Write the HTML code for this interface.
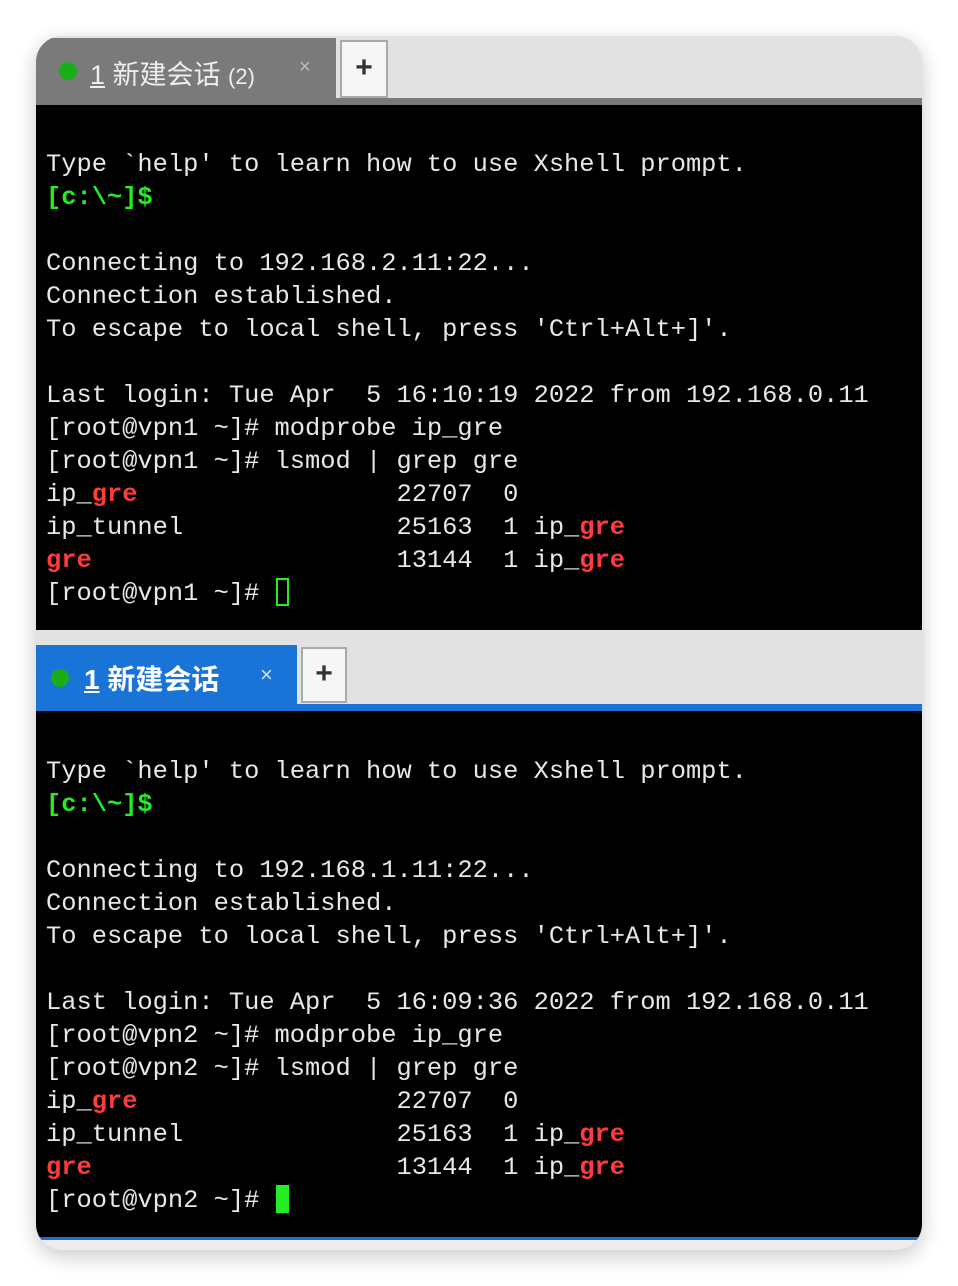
<!DOCTYPE html>
<html><head><meta charset="utf-8"><style>
html,body{margin:0;padding:0;background:#fff;width:958px;height:1286px;overflow:hidden}
.card{position:absolute;left:36px;top:36px;width:886px;height:1214px;border-radius:26px;overflow:hidden;background:#e2e2e2;box-shadow:0 6px 20px rgba(0,0,0,.22)}
.abs{position:absolute}
.term{position:absolute;left:0;width:886px;background:#000}
pre{margin:0;position:absolute;left:10px;font-family:"Liberation Mono",monospace;font-size:25.4px;line-height:33px;color:#e8e8e8}
.g{color:#22ee22;font-weight:bold}
.r{color:#ff3b3b;font-weight:bold}
.tab{font-family:"Liberation Sans","Noto Sans CJK SC",sans-serif;position:absolute}
.dot{position:absolute;width:18px;height:18px;border-radius:50%;background:#1aad1a}
.plus{position:absolute;background:#f6f6f6;border:2px solid #aaa;box-sizing:border-box;font:bold 30px "Liberation Sans",sans-serif;color:#333;text-align:center}
</style></head><body>
<div class="card">
  <div class="abs" style="left:0;top:0;width:886px;height:62px;background:#e2e2e2"></div>
  <div class="abs" style="left:0;top:2px;width:300px;height:62px;background:#7a7a7a"></div>
  <div class="dot" style="left:23px;top:26px"></div>
  <div class="tab" style="left:54px;top:17px;font-size:27px;color:#eee"><span style="text-decoration:underline">1</span> 新建会话 <span style="font-size:22px">(2)</span></div>
  <div class="tab" style="left:263px;top:20px;font-size:20px;color:#bbb">×</div>
  <div class="plus" style="left:304px;top:4px;width:48px;height:58px;line-height:52px">+</div>
  <div class="abs" style="left:0;top:62px;width:886px;height:7px;background:#7a7a7a"></div>
  <div class="term" style="top:69px;height:525px">
    <pre style="top:43px">Type `help' to learn how to use Xshell prompt.
<span class="g">[c:\~]$</span>

Connecting to 192.168.2.11:22...
Connection established.
To escape to local shell, press 'Ctrl+Alt+]'.

Last login: Tue Apr  5 16:10:19 2022 from 192.168.0.11
[root@vpn1 ~]# modprobe ip_gre
[root@vpn1 ~]# lsmod | grep gre
ip_<span class="r">gre</span>                 22707  0
ip_tunnel              25163  1 ip_<span class="r">gre</span>
<span class="r">gre</span>                    13144  1 ip_<span class="r">gre</span>
[root@vpn1 ~]# </pre>
    <div class="abs" style="left:240px;top:473px;width:13px;height:28px;border:2px solid #22ee22;box-sizing:border-box"></div>
  </div>
  <div class="abs" style="left:0;top:594px;width:886px;height:15px;background:#e2e2e2"></div>
  <div class="abs" style="left:0;top:609px;width:261px;height:60px;background:#1a73d6"></div>
  <div class="dot" style="left:15px;top:633px"></div>
  <div class="tab" style="left:48px;top:622px;font-size:28px;color:#fff;font-weight:bold"><span style="text-decoration:underline">1</span> 新建会话</div>
  <div class="tab" style="left:224px;top:626px;font-size:22px;color:#cfe0f5">×</div>
  <div class="plus" style="left:265px;top:611px;width:46px;height:56px;line-height:50px">+</div>
  <div class="abs" style="left:0;top:668px;width:886px;height:7px;background:#1a73d6"></div>
  <div class="term" style="top:675px;height:526px">
    <pre style="top:44px">Type `help' to learn how to use Xshell prompt.
<span class="g">[c:\~]$</span>

Connecting to 192.168.1.11:22...
Connection established.
To escape to local shell, press 'Ctrl+Alt+]'.

Last login: Tue Apr  5 16:09:36 2022 from 192.168.0.11
[root@vpn2 ~]# modprobe ip_gre
[root@vpn2 ~]# lsmod | grep gre
ip_<span class="r">gre</span>                 22707  0
ip_tunnel              25163  1 ip_<span class="r">gre</span>
<span class="r">gre</span>                    13144  1 ip_<span class="r">gre</span>
[root@vpn2 ~]# </pre>
    <div class="abs" style="left:240px;top:474px;width:13px;height:28px;background:#22ee22"></div>
  </div>
  <div class="abs" style="left:0;top:1201px;width:886px;height:3px;background:#1a73d6"></div>
  <div class="abs" style="left:0;top:1204px;width:886px;height:10px;background:#ececec"></div>
</div>
</body></html>
